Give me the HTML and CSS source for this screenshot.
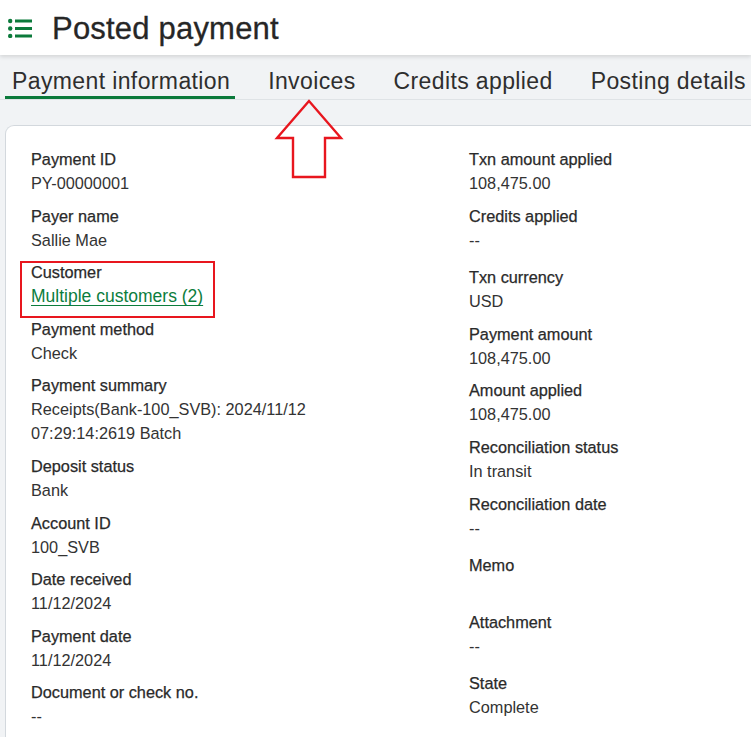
FILE: index.html
```html
<!DOCTYPE html>
<html lang="en">
<head>
<meta charset="utf-8">
<title>Posted payment</title>
<link rel="stylesheet" href="styles.css">
</head>
<body>
<div class="page">
  <header class="header">
    <svg class="menu-icon" width="24" height="20" viewBox="0 0 24 20" aria-hidden="true">
      <circle cx="2.2" cy="3" r="2.2" fill="#0b7a3b"/>
      <circle cx="2.2" cy="10.5" r="2.2" fill="#0b7a3b"/>
      <circle cx="2.2" cy="18" r="2.2" fill="#0b7a3b"/>
      <rect x="7" y="1.5" width="17" height="3" fill="#0b7a3b"/>
      <rect x="7" y="9" width="17" height="3" fill="#0b7a3b"/>
      <rect x="7" y="16.5" width="17" height="3" fill="#0b7a3b"/>
    </svg>
    <h1 class="title">Posted payment</h1>
  </header>
  <nav class="tabs">
    <div class="tab active">Payment information</div>
    <div class="tab">Invoices</div>
    <div class="tab">Credits applied</div>
    <div class="tab">Posting details</div>
  </nav>
  <svg class="arrow" width="70" height="82" viewBox="0 0 70 82" aria-hidden="true">
    <polygon points="35,2 3,39 19,39 19,78 51,78 51,39 67,39" fill="none" stroke="#e8161e" stroke-width="2.4"/>
  </svg>
  <main class="content">
    <section class="card">
      <div class="col">
        <div class="field"><div class="label">Payment ID</div><div class="value">PY-00000001</div></div>
        <div class="field"><div class="label">Payer name</div><div class="value">Sallie Mae</div></div>
        <div class="field highlight"><div class="label">Customer</div><div class="value"><a class="link" href="#">Multiple customers (2)</a></div></div>
        <div class="field"><div class="label">Payment method</div><div class="value">Check</div></div>
        <div class="field"><div class="label">Payment summary</div><div class="value">Receipts(Bank-100_SVB): 2024/11/12<br>07:29:14:2619 Batch</div></div>
        <div class="field"><div class="label">Deposit status</div><div class="value">Bank</div></div>
        <div class="field"><div class="label">Account ID</div><div class="value">100_SVB</div></div>
        <div class="field"><div class="label">Date received</div><div class="value">11/12/2024</div></div>
        <div class="field"><div class="label">Payment date</div><div class="value">11/12/2024</div></div>
        <div class="field"><div class="label">Document or check no.</div><div class="value empty">--</div></div>
      </div>
      <div class="col">
        <div class="field"><div class="label">Txn amount applied</div><div class="value">108,475.00</div></div>
        <div class="field"><div class="label">Credits applied</div><div class="value empty">--</div></div>
        <div class="field"><div class="label">Txn currency</div><div class="value">USD</div></div>
        <div class="field"><div class="label">Payment amount</div><div class="value">108,475.00</div></div>
        <div class="field"><div class="label">Amount applied</div><div class="value">108,475.00</div></div>
        <div class="field"><div class="label">Reconciliation status</div><div class="value">In transit</div></div>
        <div class="field"><div class="label">Reconciliation date</div><div class="value empty">--</div></div>
        <div class="field"><div class="label">Memo</div><div class="value"></div></div>
        <div class="field"><div class="label">Attachment</div><div class="value empty">--</div></div>
        <div class="field"><div class="label">State</div><div class="value">Complete</div></div>
      </div>
    </section>
  </main>
</div>
</body>
</html>
```
FILE: styles.css
```css
* { box-sizing: border-box; }
html, body {
  margin: 0;
  padding: 0;
  background: #f1f3f5;
  font-family: "Liberation Sans", Arial, sans-serif;
  color: #2b2b2b;
  overflow: hidden;
}
.page {
  position: relative;
  width: 751px;
  height: 737px;
  overflow: hidden;
}
.header {
  position: relative;
  z-index: 2;
  height: 55px;
  background: #ffffff;
  display: flex;
  align-items: center;
  padding-left: 8px;
  box-shadow: 0 2px 4px rgba(0, 0, 0, 0.12);
}
.menu-icon {
  display: block;
}
.title {
  margin: 2px 0 0 20px;
  font-size: 31px;
  letter-spacing: 0.2px;
  font-weight: normal;
  color: #262626;
  line-height: 36px;
  -webkit-text-stroke: 0.3px #262626;
}
.tabs {
  display: flex;
  gap: 26px;
  height: 45px;
  padding-left: 5px;
  border-bottom: 1px solid #dfe3e6;
  background: #f1f3f5;
}
.tab {
  font-size: 23px;
  letter-spacing: 0.38px;
  color: #2e2e2e;
  padding: 13px 5px 0 7px;
  height: 44px;
  white-space: nowrap;
  border-bottom: 3px solid transparent;
  line-height: 26px;
}
.tab.active {
  border-bottom-color: #0b7a3b;
}
.arrow {
  position: absolute;
  left: 274px;
  top: 99px;
  z-index: 3;
}
.content {
  padding: 25px 0 0 5px;
}
.card {
  background: #ffffff;
  border: 1px solid #d3d8dd;
  border-right: none;
  border-radius: 9px 0 0 0;
  display: grid;
  grid-template-columns: 438px 1fr;
  align-items: start;
  padding: 21px 0 0 25px;
  height: 640px;
}
.field {
  position: relative;
  margin-bottom: 8.6px;
}
.label {
  font-size: 16.3px;
  line-height: 24px;
  color: #2a2a2a;
  -webkit-text-stroke: 0.25px #2a2a2a;
}
.value {
  font-size: 16.3px;
  line-height: 24px;
  height: auto;
  color: #333333;
  min-height: 24px;
}
.value.empty {
  min-height: 29px;
}
.link {
  font-size: 17.5px;
  line-height: 24px;
  vertical-align: top;
  color: #0c7d3d;
  text-decoration: underline;
  text-underline-offset: 3px;
  text-decoration-thickness: 1px;
}
.highlight::after {
  content: "";
  position: absolute;
  left: -11px;
  top: 1px;
  width: 191px;
  height: 53px;
  border: 2px solid #e8161e;
  pointer-events: none;
}
```
